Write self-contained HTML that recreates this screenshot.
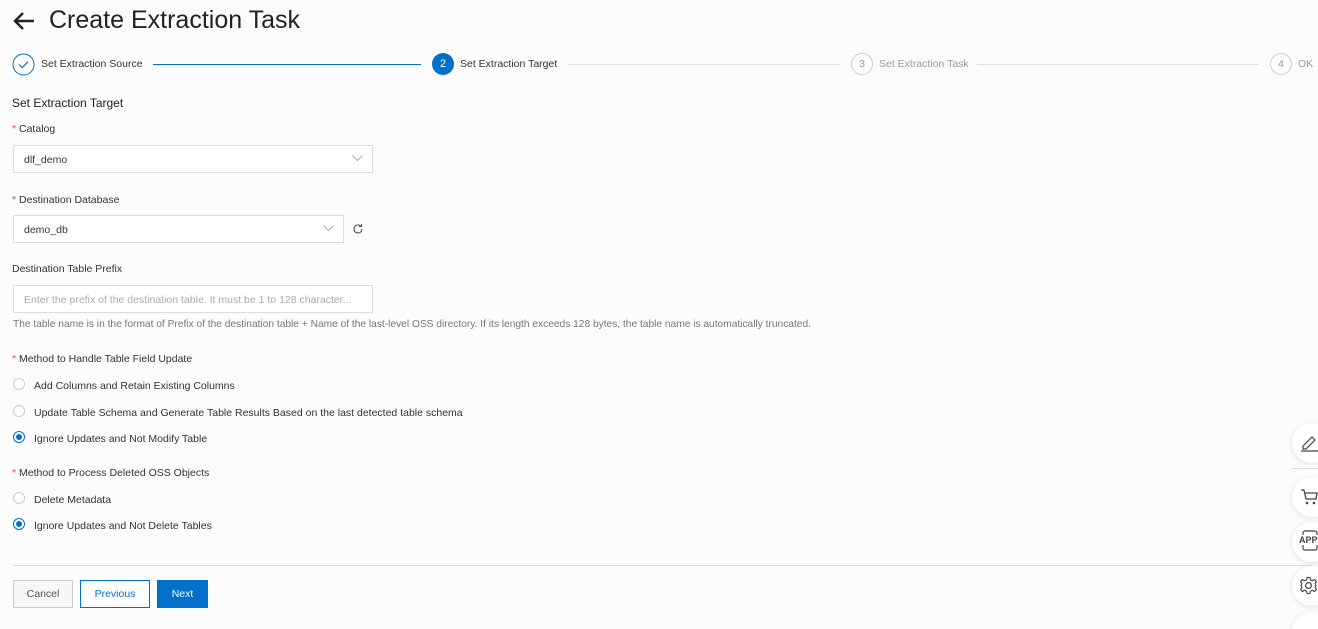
<!DOCTYPE html><html style="overflow:hidden;height:629px"><head><style>
body{margin:0;width:1318px;height:629px;background:#fcfcfc;font-family:"Liberation Sans",sans-serif;color:#333;position:relative;overflow:hidden;font-size:10.5px}
.a{position:absolute;white-space:nowrap}
.lbl{font-size:10.5px;color:#333}
.req{color:#e44}
.inp{position:absolute;border:1px solid #dcdcdc;background:#fff;box-sizing:border-box;height:28px;font-size:10.5px;line-height:28px;padding-left:10px}
.radio{position:absolute;width:12px;height:12px;border:1px solid #ccc;border-radius:50%;background:#fff;box-sizing:border-box}
.radio.on{border-color:#0070cc}
.radio.on:after{content:"";position:absolute;left:2px;top:2px;width:6px;height:6px;border-radius:50%;background:#0070cc}
.side{position:absolute;left:1292px;width:40px;height:40px;border-radius:50%;background:#fff;box-shadow:0 1px 6px rgba(0,0,0,.12)}
.btn{position:absolute;top:580px;height:28px;box-sizing:border-box;font-size:10.5px;line-height:27px;text-align:center}
</style></head><body>
<svg class="a" style="left:12px;top:11px" width="24" height="20" viewBox="0 0 24 20"><path d="M22 10H3M11 2L3 10l8 8" stroke="#222" stroke-width="2.4" fill="none"/></svg>
<div class="a" style="left:49px;top:6px;font-size:25px;color:#222">Create Extraction Task</div>

<svg class="a" style="left:12px;top:53px" width="23" height="23"><circle cx="11.5" cy="11.5" r="10.5" fill="#fff" stroke="#0070cc" stroke-width="1"/><path d="M7 11.5l3.2 3.2 5.8-6" stroke="#0070cc" fill="none" stroke-width="1.2"/></svg>
<div class="a lbl" style="left:41px;top:58px">Set Extraction Source</div>
<div class="a" style="left:153px;top:64px;width:268px;height:1px;background:#0070cc"></div>
<div class="a" style="left:432px;top:53px;width:22px;height:22px;border-radius:50%;background:#0070cc;color:#fff;text-align:center;line-height:22px;font-size:11px">2</div>
<div class="a lbl" style="left:460px;top:58px">Set Extraction Target</div>
<div class="a" style="left:568px;top:64px;width:272px;height:1px;background:#ddd"></div>
<div class="a" style="left:851px;top:53px;width:20px;height:20px;border-radius:50%;border:1px solid #ccc;color:#999;text-align:center;line-height:20px">3</div>
<div class="a" style="left:879px;top:58px;color:#999">Set Extraction Task</div>
<div class="a" style="left:977px;top:64px;width:282px;height:1px;background:#ddd"></div>
<div class="a" style="left:1270px;top:53px;width:20px;height:20px;border-radius:50%;border:1px solid #ccc;color:#999;text-align:center;line-height:20px">4</div>
<div class="a" style="left:1298px;top:58px;color:#999">OK</div>

<div class="a" style="left:12px;top:96px;font-size:12px;color:#222">Set Extraction Target</div>
<div class="a lbl" style="left:12px;top:123px"><span class="req">*</span> Catalog</div>
<div class="inp" style="left:13px;top:145px;width:360px">dlf_demo</div>
<svg class="a" style="left:352px;top:155px" width="11" height="7"><path d="M.5 .5l5 5 5-5" stroke="#aaa" fill="none"/></svg>
<div class="a lbl" style="left:12px;top:194px"><span class="req">*</span> Destination Database</div>
<div class="inp" style="left:13px;top:215px;width:331px">demo_db</div>
<svg class="a" style="left:323px;top:225px" width="11" height="7"><path d="M.5 .5l5 5 5-5" stroke="#aaa" fill="none"/></svg>
<svg class="a" style="left:352px;top:223px" width="12" height="12" viewBox="0 0 12 12"><path d="M10 6a4 4 0 1 1-1.2-2.9" stroke="#555" fill="none" stroke-width="1.1"/><path d="M9.5 1v2.6H7" stroke="#555" fill="none" stroke-width="1.1"/></svg>
<div class="a lbl" style="left:12px;top:263px">Destination Table Prefix</div>
<div class="inp" style="left:13px;top:285px;width:360px;color:#aaa">Enter the prefix of the destination table. It must be 1 to 128 character...</div>
<div class="a" style="left:13px;top:319px;color:#777;font-size:10.2px">The table name is in the format of Prefix of the destination table + Name of the last-level OSS directory. If its length exceeds 128 bytes, the table name is automatically truncated.</div>

<div class="a lbl" style="left:12px;top:353px"><span class="req">*</span> Method to Handle Table Field Update</div>
<div class="radio" style="left:13px;top:378px"></div><div class="a lbl" style="left:34px;top:380px">Add Columns and Retain Existing Columns</div>
<div class="radio" style="left:13px;top:405px"></div><div class="a lbl" style="left:34px;top:407px">Update Table Schema and Generate Table Results Based on the last detected table schema</div>
<div class="radio on" style="left:13px;top:431px"></div><div class="a lbl" style="left:34px;top:433px">Ignore Updates and Not Modify Table</div>
<div class="a lbl" style="left:12px;top:467px"><span class="req">*</span> Method to Process Deleted OSS Objects</div>
<div class="radio" style="left:13px;top:492px"></div><div class="a lbl" style="left:34px;top:494px">Delete Metadata</div>
<div class="radio on" style="left:13px;top:518px"></div><div class="a lbl" style="left:34px;top:520px">Ignore Updates and Not Delete Tables</div>

<div class="a" style="left:13px;top:565px;width:1280px;height:1px;background:#ddd"></div>
<div class="btn" style="left:13px;width:60px;border:1px solid #ccc;background:#f7f7f7;color:#555">Cancel</div>
<div class="btn" style="left:80px;width:70px;border:1px solid #0070cc;background:#fff;color:#0070cc">Previous</div>
<div class="btn" style="left:157px;width:51px;background:#0070cc;color:#fff;line-height:28px">Next</div>

<div class="side" style="top:423px"></div>
<svg class="a" style="left:1300px;top:432px" width="18" height="20"><path d="M3 14l9-9 3 3-9 9H3z" stroke="#444" fill="none" stroke-width="1.2"/><path d="M1 19h17" stroke="#444" stroke-width="1.2"/></svg>
<div class="a" style="left:1292px;top:468px;width:30px;height:1px;background:#ddd"></div>
<div class="side" style="top:477px"></div>
<svg class="a" style="left:1300px;top:488px" width="18" height="18"><path d="M1 2h3l2 9h10l1-6H5" stroke="#444" fill="none" stroke-width="1.3"/><circle cx="7" cy="15" r="1.3" fill="#444"/><circle cx="14" cy="15" r="1.3" fill="#444"/></svg>
<div class="side" style="top:522px"></div>
<svg class="a" style="left:1301px;top:530px" width="17" height="22"><rect x="2" y="1" width="14" height="19" rx="2" stroke="#444" fill="none" stroke-width="1.2"/></svg>
<div class="a" style="left:1299px;top:535px;font-size:9px;font-weight:bold;color:#444;background:#fff">APP</div>
<div class="a" style="left:1200px;top:565px;width:112px;height:1px;background:#ddd"></div>
<div class="side" style="top:566px"></div>
<svg class="a" style="left:1299px;top:576px" width="19" height="19" viewBox="0 0 20 20"><circle cx="10" cy="10" r="3" stroke="#444" fill="none" stroke-width="1.3"/><path d="M8.5 1.5h3l.5 2.5 2 1 2.3-1.3 2 2L17 8l.8 2-.8 2 1.3 2.3-2 2L14 15l-2 1-.5 2.5h-3L8 16l-2-1-2.3 1.3-2-2L3 12l-.8-2L3 8 1.7 5.7l2-2L6 5l2-1z" stroke="#444" fill="none" stroke-width="1.2"/></svg>
<div class="side" style="top:612px"></div>
</body></html>
